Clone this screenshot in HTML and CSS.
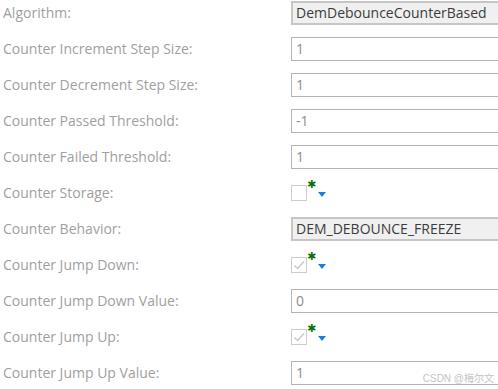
FILE: index.html
```html
<!DOCTYPE html>
<html>
<head>
<meta charset="utf-8">
<link rel="stylesheet" href="styles.css">
</head>
<body>
<div class="form">
  <div class="row"><div class="label">Algorithm:</div><div class="ctrl"><div class="box ro dark">DemDebounceCounterBased</div></div></div>
  <div class="row"><div class="label">Counter Increment Step Size:</div><div class="ctrl"><div class="box">1</div></div></div>
  <div class="row"><div class="label">Counter Decrement Step Size:</div><div class="ctrl"><div class="box">1</div></div></div>
  <div class="row"><div class="label">Counter Passed Threshold:</div><div class="ctrl"><div class="box">-1</div></div></div>
  <div class="row"><div class="label">Counter Failed Threshold:</div><div class="ctrl"><div class="box">1</div></div></div>
  <div class="row"><div class="label">Counter Storage:</div><div class="ctrl">
    <span class="check"></span><span class="star">✱</span><svg class="tri" width="8" height="5" viewBox="0 0 8 5"><path d="M0 0H8L4 5Z" fill="#1a7fd8"/></svg>
  </div></div>
  <div class="row"><div class="label">Counter Behavior:</div><div class="ctrl"><div class="box ro dark">DEM_DEBOUNCE_FREEZE</div></div></div>
  <div class="row"><div class="label">Counter Jump Down:</div><div class="ctrl">
    <span class="check"><svg width="14" height="14" viewBox="0 0 14 14"><path d="M2.5 7.5L5.5 10.5L12 3.5" fill="none" stroke="#c8c8c8" stroke-width="1.3"/></svg></span><span class="star">✱</span><svg class="tri" width="8" height="5" viewBox="0 0 8 5"><path d="M0 0H8L4 5Z" fill="#1a7fd8"/></svg>
  </div></div>
  <div class="row"><div class="label">Counter Jump Down Value:</div><div class="ctrl"><div class="box">0</div></div></div>
  <div class="row"><div class="label">Counter Jump Up:</div><div class="ctrl">
    <span class="check"><svg width="14" height="14" viewBox="0 0 14 14"><path d="M2.5 7.5L5.5 10.5L12 3.5" fill="none" stroke="#c8c8c8" stroke-width="1.3"/></svg></span><span class="star">✱</span><svg class="tri" width="8" height="5" viewBox="0 0 8 5"><path d="M0 0H8L4 5Z" fill="#1a7fd8"/></svg>
  </div></div>
  <div class="row"><div class="label">Counter Jump Up Value:</div><div class="ctrl"><div class="box">1</div></div></div>
</div>
<div class="watermark">CSDN @梅尔文</div>
</body>
</html>
```
FILE: styles.css
```css
html, body {
  margin: 0;
  padding: 0;
  background: #fff;
  overflow: hidden;
}
body {
  width: 498px;
  height: 389px;
  position: relative;
  font-family: "Open Sans", "Noto Sans", sans-serif;
  font-size: 14px;
}
.form {
  padding-top: 1px;
  display: flex;
  flex-direction: column;
}
.row {
  display: grid;
  grid-template-columns: 291px 1fr;
  height: 36px;
  align-items: start;
}
.label {
  height: 24px;
  line-height: 24px;
  padding-left: 3px;
  color: #a0a0a0;
  white-space: nowrap;
}
.ctrl {
  height: 24px;
  display: flex;
  align-items: center;
  position: relative;
}
.box {
  box-sizing: border-box;
  height: 24px;
  width: 220px;
  border: 1px solid #b4b4b4;
  background: #fff;
  color: #8c8c8c;
  line-height: 22px;
  padding-left: 4px;
  white-space: nowrap;
}
.box.ro {
  background: #f0f0f0;
  border: 2px solid #c6c6c6;
  line-height: 20px;
  padding-left: 3px;
}
.box.dark {
  color: #3c3c3c;
}
.check {
  box-sizing: border-box;
  width: 16px;
  height: 16px;
  border: 1px solid #cdcdcd;
  background: #fff;
  display: inline-flex;
  align-items: center;
  justify-content: center;
}
.star {
  color: #107010;
  font-family: "DejaVu Sans", sans-serif;
  font-size: 11px;
  line-height: 1;
  align-self: flex-start;
  margin-top: -2px;
  margin-left: 0;
}
.tri {
  margin-left: 2px;
  margin-top: 3px;
}
.watermark {
  position: absolute;
  right: 4px;
  bottom: 4px;
  font-family: "Liberation Sans", "Noto Sans CJK SC", sans-serif;
  font-size: 10px;
  color: #c4c4c4;
}
```
